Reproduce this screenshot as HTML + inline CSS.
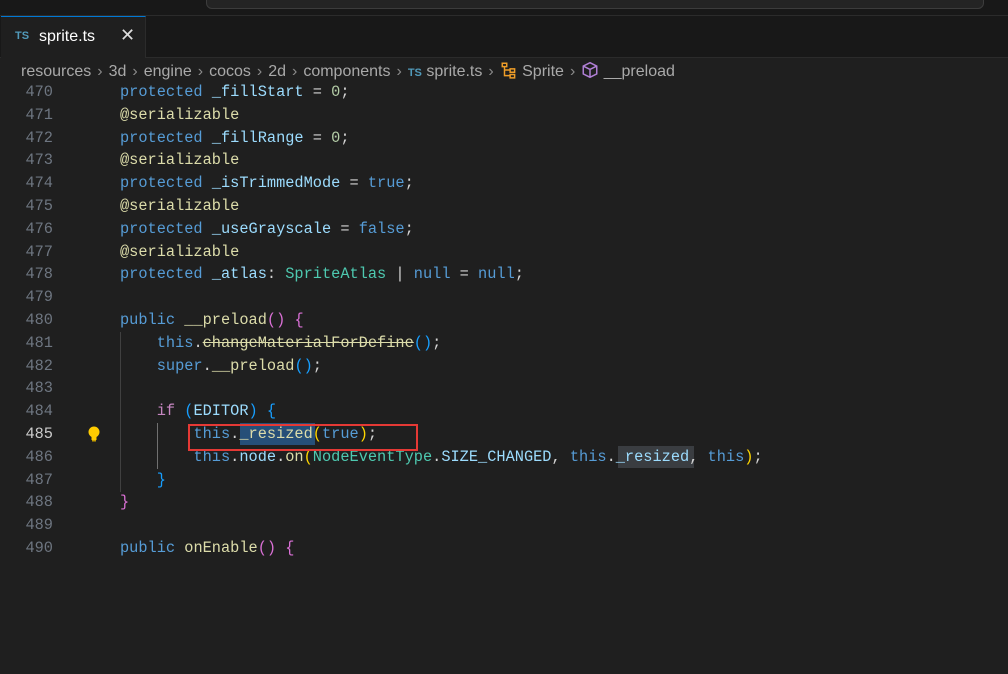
<!DOCTYPE html>
<html><head><style>
body{margin:0;width:1008px;height:551px;overflow:hidden;background:#1f1f1f;font-family:"Liberation Sans",sans-serif;position:relative}
.top{position:absolute;left:0;top:0;width:1008px;height:15px;background:#181818;border-bottom:1px solid #2b2b2b}
.search{position:absolute;left:206px;top:-6px;height:13px;border:1px solid #3c3c3c;border-radius:0 0 6px 6px;background:#242424}
.tabbar{position:absolute;left:0;top:16px;width:1008px;height:41px;background:#181818;border-bottom:1px solid #2b2b2b}
.tab{position:absolute;left:1px;top:16px;width:145px;height:42px;background:#1f1f1f;border-top:1px solid #0078d4;border-right:1px solid #2b2b2b;box-sizing:border-box}
.tab .ts{position:absolute;left:14px;top:13px;font-size:11px;color:#519aba;font-weight:bold}
.tab .nm{position:absolute;left:38px;top:11px;font-size:16px;color:#fff}
.tab .x{position:absolute;left:119px;top:8px;font-size:18px;color:#ddd}
.bc{position:absolute;left:21px;top:61px;font-size:16px;color:#a9a9a9;white-space:nowrap;line-height:20px}
.bc .s{color:#8a8a8a;margin:0 6px}
.code{position:absolute;left:0;top:81px;width:1008px;font-family:"Liberation Mono",monospace;font-size:15.3px;line-height:22.8px;white-space:pre}
.ln{position:absolute;left:0;width:53px;text-align:right;color:#6e7681}
.l{position:absolute;left:120px;color:#d4d4d4}
.k{color:#569cd6}.p{color:#9cdcfe}.f{color:#dcdcaa}.n{color:#b5cea8}.t{color:#4ec9b0}.c{color:#c586c0}
.g{color:#ffd700}.m{color:#da70d6}.b{color:#179fff}
</style></head><body>
<div class="top"></div><div class="search" style="left:206px;width:776px"></div>
<div class="tabbar"></div>
<div class="tab"><span class="ts">TS</span><span class="nm">sprite.ts</span><span class="x">✕</span></div>
<div class="bc">resources<span class="s">›</span>3d<span class="s">›</span>engine<span class="s">›</span>cocos<span class="s">›</span>2d<span class="s">›</span>components<span class="s">›</span><b style="color:#519aba;font-size:11px">TS</b> sprite.ts<span class="s">›</span><svg width="18" height="18" viewBox="0 0 16 16" style="vertical-align:-3px"><path d="M2 2h4v3H2zM9 7h4v3H9zM9 12h4v3H9zM4 5v8h5M4 8h5" fill="none" stroke="#ee9d28" stroke-width="1.3"/></svg> Sprite<span class="s">›</span><svg width="18" height="18" viewBox="0 0 16 16" style="vertical-align:-3px"><path d="M8 1.5l6 3v7l-6 3-6-3v-7zM2 4.5l6 3 6-3M8 7.5v7" fill="none" stroke="#b180d7" stroke-width="1.3"/></svg> __preload</div>
<div class="code">
<div style="position:absolute;left:240px;top:342px;width:75px;height:22px;background:#264f78"></div>
<div style="position:absolute;left:618px;top:365px;width:76px;height:22px;background:#3a3d41"></div>
<div style="position:absolute;left:120px;top:251px;width:1px;height:160px;background:#404040"></div>
<div style="position:absolute;left:157px;top:342px;width:1px;height:46px;background:#707070"></div>
<div class="ln" style="top:0">470</div><div class="l" style="top:0"><span class="k">protected</span> <span class="p">_fillStart</span> = <span class="n">0</span>;</div>
<div class="ln" style="top:22.8px">471</div><div class="l" style="top:22.8px"><span class="f">@serializable</span></div>
<div class="ln" style="top:45.6px">472</div><div class="l" style="top:45.6px"><span class="k">protected</span> <span class="p">_fillRange</span> = <span class="n">0</span>;</div>
<div class="ln" style="top:68.4px">473</div><div class="l" style="top:68.4px"><span class="f">@serializable</span></div>
<div class="ln" style="top:91.2px">474</div><div class="l" style="top:91.2px"><span class="k">protected</span> <span class="p">_isTrimmedMode</span> = <span class="k">true</span>;</div>
<div class="ln" style="top:114px">475</div><div class="l" style="top:114px"><span class="f">@serializable</span></div>
<div class="ln" style="top:136.8px">476</div><div class="l" style="top:136.8px"><span class="k">protected</span> <span class="p">_useGrayscale</span> = <span class="k">false</span>;</div>
<div class="ln" style="top:159.6px">477</div><div class="l" style="top:159.6px"><span class="f">@serializable</span></div>
<div class="ln" style="top:182.4px">478</div><div class="l" style="top:182.4px"><span class="k">protected</span> <span class="p">_atlas</span>: <span class="t">SpriteAtlas</span> | <span class="k">null</span> = <span class="k">null</span>;</div>
<div class="ln" style="top:205.2px">479</div>
<div class="ln" style="top:228px">480</div><div class="l" style="top:228px"><span class="k">public</span> <span class="f">__preload</span><span class="m">()</span> <span class="m">{</span></div>
<div class="ln" style="top:250.8px">481</div><div class="l" style="top:250.8px">    <span class="k">this</span>.<span class="f" style="text-decoration:line-through">changeMaterialForDefine</span><span class="b">()</span>;</div>
<div class="ln" style="top:273.6px">482</div><div class="l" style="top:273.6px">    <span class="k">super</span>.<span class="f">__preload</span><span class="b">()</span>;</div>
<div class="ln" style="top:296.4px">483</div>
<div class="ln" style="top:319.2px">484</div><div class="l" style="top:319.2px">    <span class="c">if</span> <span class="b">(</span><span class="p">EDITOR</span><span class="b">)</span> <span class="b">{</span></div>
<div class="ln" style="top:342px;color:#ccc">485</div><div class="l" style="top:342px">        <span class="k">this</span>.<span class="f">_resized</span><span class="g">(</span><span class="k">true</span><span class="g">)</span>;</div>
<div class="ln" style="top:364.8px">486</div><div class="l" style="top:364.8px">        <span class="k">this</span>.<span class="p">node</span>.<span class="f">on</span><span class="g">(</span><span class="t">NodeEventType</span>.<span class="p">SIZE_CHANGED</span>, <span class="k">this</span>.<span class="p">_resized</span>, <span class="k">this</span><span class="g">)</span>;</div>
<div class="ln" style="top:387.6px">487</div><div class="l" style="top:387.6px">    <span class="b">}</span></div>
<div class="ln" style="top:410.4px">488</div><div class="l" style="top:410.4px"><span class="m">}</span></div>
<div class="ln" style="top:433.2px">489</div>
<div class="ln" style="top:456px">490</div><div class="l" style="top:456px"><span class="k">public</span> <span class="f">onEnable</span><span class="m">()</span> <span class="m">{</span></div>
</div>
<svg style="position:absolute;left:86px;top:425px" width="16" height="18" viewBox="0 0 16 18"><circle cx="8" cy="7" r="5.5" fill="#ffcc00"/><rect x="5.5" y="11" width="5" height="4" fill="#ffcc00"/><rect x="6" y="15" width="4" height="1.5" fill="#c9a000"/></svg>
<div style="position:absolute;left:188px;top:424px;width:226px;height:23px;border:2px solid #e53935"></div>
</body></html>
